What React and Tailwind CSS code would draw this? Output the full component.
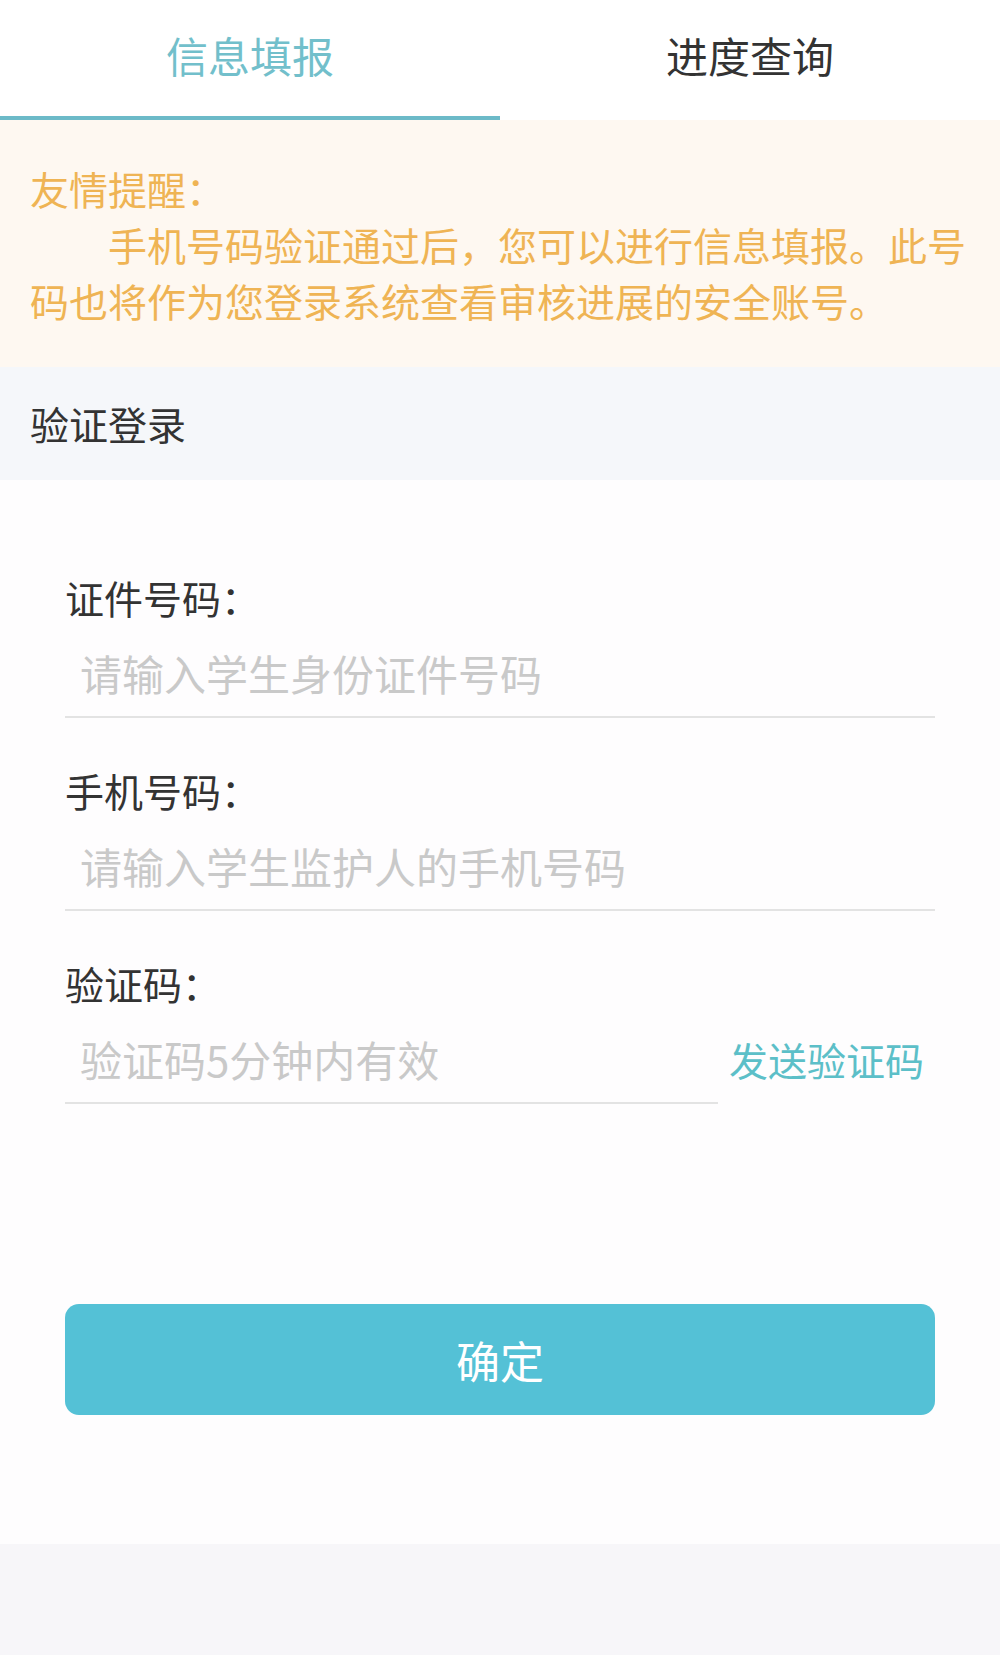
export default function App() {
  const font = { fontFamily: '"Noto Sans CJK SC", "Noto Sans", sans-serif' };
  return (
    <div className="w-[1000px] h-[1655px] flex flex-col bg-[#f7f6f9]" style={font}>
      {/* Tabs */}
      <div className="flex h-[120px] bg-white">
        <div className="w-1/2 flex items-center justify-center border-b-4 border-[#6cbac8] text-[42px] text-[#72bfcb] pb-[8px]">
          信息填报
        </div>
        <div className="w-1/2 flex items-center justify-center border-b-4 border-transparent text-[42px] text-[#333333] pb-[8px]">
          进度查询
        </div>
      </div>

      {/* Reminder */}
      <div className="bg-[#fef8f1] px-[30px] pt-[40px] pb-[39px] text-[39px] leading-[56px] text-[#efb454]">
        <div>友情提醒：</div>
        <div className="indent-[2em]">
          手机号码验证通过后，您可以进行信息填报。此号码也将作为您登录系统查看审核进展的安全账号。
        </div>
      </div>

      {/* Section header */}
      <div className="h-[113px] bg-[#f5f7fa] flex items-center px-[30px] text-[39px] text-[#333333]">
        验证登录
      </div>

      {/* Form */}
      <div className="bg-[#fefdfe] px-[65px] pt-[93px] h-[1064px] flex flex-col">
        <div className="flex flex-col">
          <div className="text-[39px] leading-[48px] text-[#333333]">证件号码：</div>
          <div className="pt-[27px] pb-[18px] border-b-2 border-[#e3e3e3]">
            <span className="block text-[42px] leading-[50px] text-[#c9c9c9] pl-[15px]">请输入学生身份证件号码</span>
          </div>
        </div>

        <div className="flex flex-col mt-[48px]">
          <div className="text-[39px] leading-[48px] text-[#333333]">手机号码：</div>
          <div className="pt-[27px] pb-[18px] border-b-2 border-[#e3e3e3]">
            <span className="block text-[42px] leading-[50px] text-[#c9c9c9] pl-[15px]">请输入学生监护人的手机号码</span>
          </div>
        </div>

        <div className="flex flex-col mt-[48px]">
          <div className="text-[39px] leading-[48px] text-[#333333]">验证码：</div>
          <div className="flex items-stretch">
            <div className="flex-1 pt-[27px] pb-[18px] border-b-2 border-[#e3e3e3]">
              <span className="block text-[42px] leading-[50px] text-[#c9c9c9] pl-[15px]">验证码5分钟内有效</span>
            </div>
            <div className="w-[217px] pt-[27px] pb-[20px] flex justify-center">
              <span className="text-[39px] leading-[50px] text-[#5cbfc8]">发送验证码</span>
            </div>
          </div>
        </div>

        <button className="mt-[200px] h-[111px] w-full rounded-[14px] bg-[#54c1d6] text-white text-[44px] flex items-center justify-center">
          确定
        </button>
      </div>
    </div>
  );
}
